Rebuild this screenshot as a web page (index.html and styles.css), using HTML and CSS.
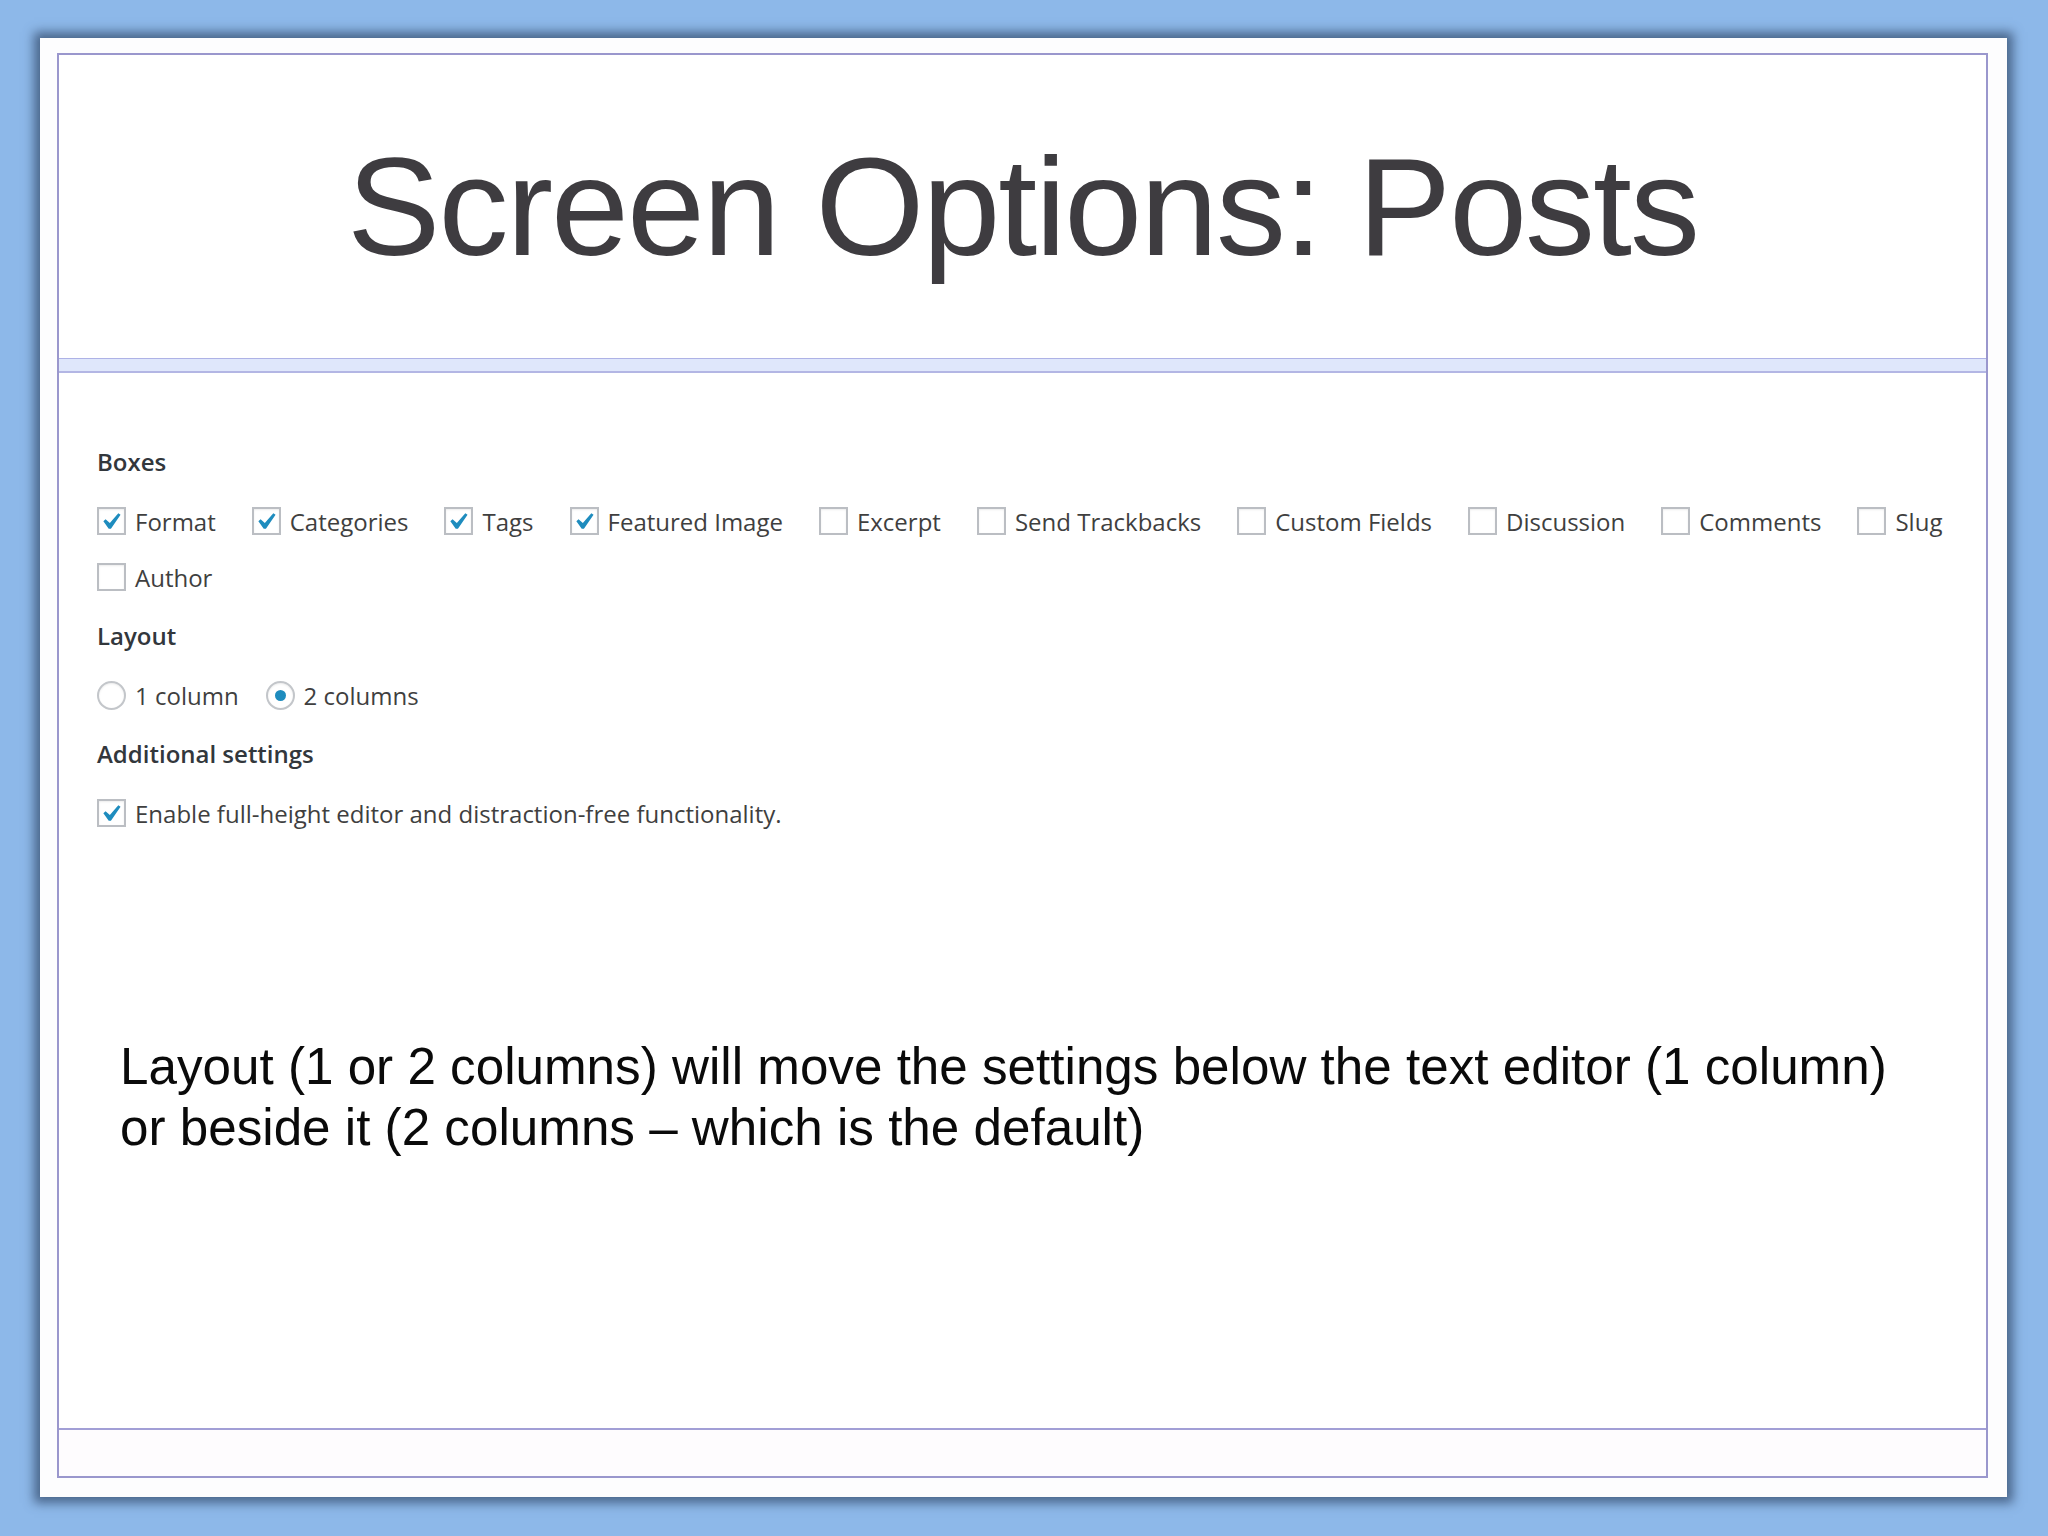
FILE: index.html
```html
<!DOCTYPE html>
<html lang="en">
    <head>
        <meta charset="utf-8" />
        <title>Screen Options: Posts</title>
        <link rel="stylesheet" href="styles.css">
    </head>

    <body>
        <div class="slide">
            <div class="frame">
                <header class="title-area">
                    <h1>Screen Options: Posts</h1>
                </header>
                <div class="band"></div>

                <main class="content">
                    <div class="screen-options">
                        <!-- Boxes -->
                        <div class="group">
                            <h5 class="legend">Boxes</h5>
                            <div class="opts">
                                <label class="opt"><span class="box"><svg viewBox="3.2 2.3 15 14.5"><path d="M14.83 4.89l1.34.94-5.81 8.38H9.02L5.78 9.67l1.34-1.25 2.570 2.4z"/></svg></span>Format</label>
                                <label class="opt"><span class="box"><svg viewBox="3.2 2.3 15 14.5"><path d="M14.83 4.89l1.34.94-5.81 8.38H9.02L5.78 9.67l1.34-1.25 2.57 2.4z"/></svg></span>Categories</label>
                                <label class="opt"><span class="box"><svg viewBox="3.2 2.3 15 14.5"><path d="M14.83 4.89l1.34.94-5.81 8.38H9.02L5.78 9.67l1.34-1.25 2.57 2.4z"/></svg></span>Tags</label>
                                <label class="opt"><span class="box"><svg viewBox="3.2 2.3 15 14.5"><path d="M14.83 4.89l1.34.94-5.81 8.38H9.02L5.78 9.67l1.34-1.25 2.57 2.4z"/></svg></span>Featured Image</label>
                                <label class="opt"><span class="box"></span>Excerpt</label>
                                <label class="opt"><span class="box"></span>Send Trackbacks</label>
                                <label class="opt"><span class="box"></span>Custom Fields</label>
                                <label class="opt"><span class="box"></span>Discussion</label>
                                <label class="opt"><span class="box"></span>Comments</label>
                                <label class="opt"><span class="box"></span>Slug</label>
                                <label class="opt"><span class="box"></span>Author</label>
                            </div>
                        </div>

                        <!-- Layout -->
                        <div class="group">
                            <h5 class="legend">Layout</h5>
                            <div class="opts radios">
                                <label class="opt"><span class="radio"></span>1 column</label>
                                <label class="opt"><span class="radio on"></span>2 columns</label>
                            </div>
                        </div>

                        <!-- Additional settings -->
                        <div class="group">
                            <h5 class="legend">Additional settings</h5>
                            <div class="opts">
                                <label class="opt"><span class="box"><svg viewBox="3.2 2.3 15 14.5"><path d="M14.83 4.89l1.34.94-5.81 8.38H9.02L5.78 9.67l1.34-1.25 2.57 2.4z"/></svg></span>Enable full-height editor and distraction-free functionality.</label>
                            </div>
                        </div>
                    </div>

                    <p class="note">Layout (1 or 2 columns) will move the settings below the text editor (1 column)<br>or beside it (2 columns – which is the default)</p>
                </main>

                <footer class="foot"></footer>
            </div>
        </div>
    </body>
</html>
```

FILE: styles.css
```css
html, body {
    height: 100%;
}
body {
    margin: 0;
    padding: 38px 41px 39px 40px;
    box-sizing: border-box;
    background-color: #8db8e9;
    overflow: hidden;
}
.slide {
    height: 100%;
    padding: 15px 19px 19px 17px;
    box-sizing: border-box;
    background-color: #fdfdfe;
    box-shadow: 0 0 10px 6px rgba(58, 82, 116, 0.8);
}
.frame {
    height: 100%;
    box-sizing: border-box;
    border: 2px solid #9a97cd;
    display: flex;
    flex-direction: column;
    background-color: #fff;
}

/* title */
.title-area {
    height: 303px;
    display: flex;
    align-items: center;
    justify-content: center;
}
.title-area h1 {
    margin: 0;
    font-family: "Liberation Sans", Arial, sans-serif;
    font-weight: normal;
    font-size: 140px;
    letter-spacing: -2px;
    color: #3e3c40;
}
.band {
    height: 12px;
    border-top: 1px solid #aeb2e6;
    border-bottom: 2px solid #b3b6e4;
    background-color: #dfe7fb;
}

/* screen options panel */
.content {
    flex: 1;
    padding: 74px 20px 0 38px;
    display: flex;
    flex-direction: column;
}
.screen-options {
    font-family: "Open Sans", sans-serif;
    font-size: 24px;
    color: #3f3f3f;
}
.group {
    margin-bottom: 24px;
}
.group:last-child {
    margin-bottom: 0;
}
.legend {
    margin: 0 0 24px 0;
    font-size: 24px;
    line-height: 30px;
    font-weight: 600;
    color: #32373c;
}
.opts {
    display: flex;
    flex-wrap: wrap;
    gap: 16px 36px;
}
.radios {
    gap: 16px 27px;
}
.opt {
    height: 40px;
    display: flex;
    align-items: center;
    white-space: nowrap;
}
.box {
    width: 29px;
    height: 28px;
    margin-right: 9px;
    box-sizing: border-box;
    border: 2px solid #bbbec3;
    box-shadow: inset 0 1px 2px rgba(0, 0, 0, 0.08);
    background-color: #fff;
    display: flex;
}
.box svg {
    width: 25px;
    height: 24px;
    fill: #1e8cbe;
}
.radio {
    width: 29px;
    height: 29px;
    margin-right: 9px;
    box-sizing: border-box;
    border: 2px solid #c3c6ca;
    border-radius: 50%;
    box-shadow: inset 0 1px 2px rgba(0, 0, 0, 0.08);
    display: flex;
    align-items: center;
    justify-content: center;
}
.radio.on::before {
    content: "";
    width: 11px;
    height: 11px;
    border-radius: 50%;
    background-color: #1e8cbe;
}

/* slide note */
.note {
    margin: 203px 0 0 23px;
    font-family: "Liberation Sans", Arial, sans-serif;
    font-size: 51.2px;
    line-height: 61px;
    color: #0a0a0a;
}

.foot {
    height: 46px;
    border-top: 2px solid #a29fd6;
    background-color: #fefcfe;
}
```
